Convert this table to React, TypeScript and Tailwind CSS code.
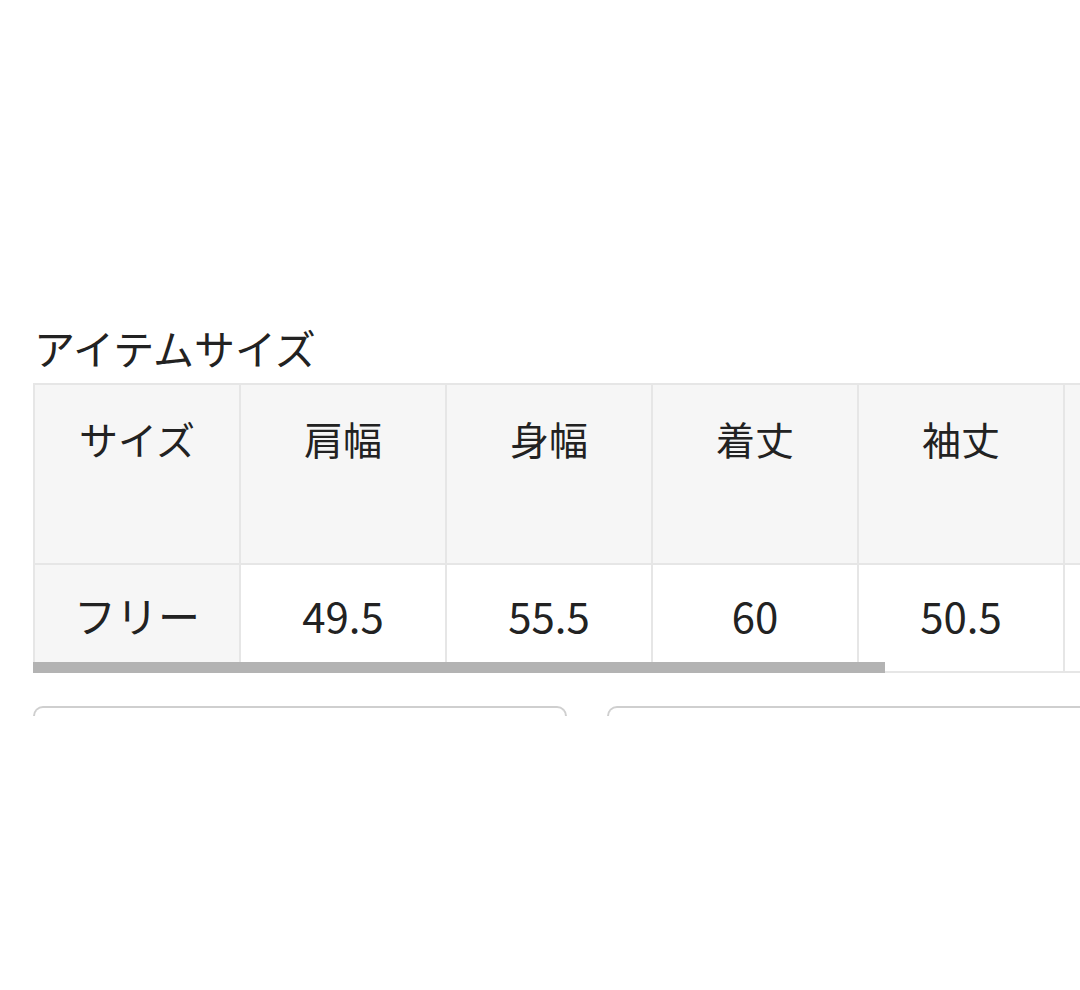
const cols = ["サイズ", "肩幅", "身幅", "着丈", "袖丈", ""];
const vals = ["フリー", "49.5", "55.5", "60", "50.5", ""];

export default function App() {
  return (
    <div
      className="w-[1080px] h-[990px] bg-white text-[#222] overflow-hidden"
      style={{ fontFamily: '"Noto Sans CJK JP", "Noto Sans", sans-serif' }}
    >
      <div className="pt-[319px] pl-[33px]">
        <h2 className="text-[41px] leading-[56px] font-normal pl-[1px]">アイテムサイズ</h2>
        <div className="relative mt-[8px] overflow-hidden">
          <table className="border-collapse table-fixed w-[1236px]">
            <tbody>
              <tr>
                {cols.map((c, i) => (
                  <th
                    key={i}
                    className="w-[206px] h-[180px] align-top pt-[33px] bg-[#f6f6f6] border-2 border-[#e6e6e6] text-[39px] leading-[40px] font-normal text-center"
                  >
                    {c}
                  </th>
                ))}
              </tr>
              <tr>
                {vals.map((v, i) => (
                  <td
                    key={i}
                    className={
                      "h-[108px] align-middle border-2 border-[#e6e6e6] text-[42px] leading-[40px] text-center pb-[6px] " +
                      (i === 0 ? "bg-[#f6f6f6]" : "bg-white")
                    }
                  >
                    {v}
                  </td>
                ))}
              </tr>
            </tbody>
          </table>
          <div className="absolute left-0 bottom-0 h-[11px] w-[852px] bg-[#b3b3b3]" />
        </div>
        <div className="flex gap-[40px] mt-[33px]">
          <div className="shrink-0 w-[534px] h-[10px] rounded-t-[10px] border-t-2 border-x-2 border-[#cfcfcf]" />
          <div className="shrink-0 w-[600px] h-[10px] rounded-t-[10px] border-t-2 border-x-2 border-[#cfcfcf]" />
        </div>
      </div>
    </div>
  );
}
